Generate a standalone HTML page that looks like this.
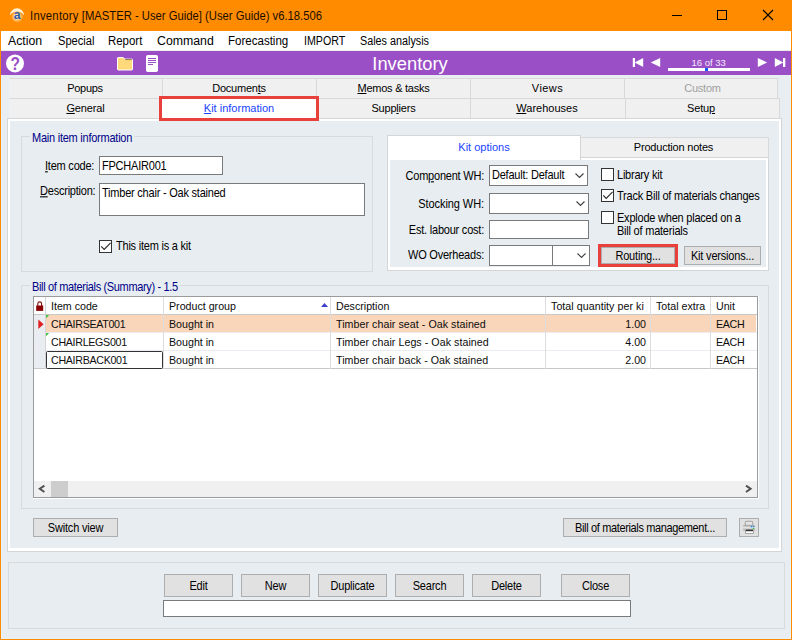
<!DOCTYPE html>
<html>
<head>
<meta charset="utf-8">
<title>Inventory</title>
<style>
*{box-sizing:border-box;margin:0;padding:0}
html,body{width:792px;height:640px;overflow:hidden}
body{background:#e7edf0;font-family:"Liberation Sans",sans-serif;font-size:11px;color:#000;position:relative}
.a{position:absolute}
.t{position:absolute;white-space:nowrap;line-height:14px;letter-spacing:-0.22px;transform:scaleY(1.08);transform-origin:0 60%}
u{text-decoration:underline;text-underline-offset:1px}
#title{left:0;top:0;width:792px;height:31px;background:#ff8c00}
#title .t{left:29.5px;top:7.5px;font-size:12.4px;line-height:16px;color:#1a0d00;letter-spacing:0;transform-origin:0 50%;transform:scaleX(.908)}
#menu{left:1px;top:31px;width:790px;height:20px;background:#fff;border-bottom:1px solid #eeefec}
#menu .t{top:2px;font-size:12.3px;line-height:16px;letter-spacing:0;transform-origin:0 50%;transform:none}
#bar .t{transform:none}
#bar{left:1px;top:51px;width:790px;height:24px;background:#9b4fc6}
#bar .ttl{left:0;width:818px;text-align:center;top:1.5px;font-size:19.2px;line-height:22px;color:#fff;letter-spacing:0;transform:scaleX(.955);transform-origin:50% 50%}
.bl{position:absolute;left:0;top:31px;width:1px;height:609px;background:#ff8c00}
.br{position:absolute;left:791px;top:31px;width:1px;height:609px;background:#ff8c00}
.bb{position:absolute;left:0;top:639px;width:792px;height:1px;background:#ff8c00}
.tab{position:absolute;height:21px;background:#f0f0f0;border:1px solid #d9d9d9;text-align:center;line-height:18px;font-size:11px}
.btn{position:absolute;background:#e1e1e1;border:1px solid #adadad;text-align:center;font-size:11px;letter-spacing:-0.2px}
.s{display:inline-block;transform:scaleY(1.08);transform-origin:0 60%}
.inp{position:absolute;background:#fff;border:1px solid #7a7a7a}
.cb{position:absolute;width:13px;height:13px;background:#fff;border:1px solid #333}
.g{position:absolute;white-space:nowrap;line-height:14px;font-size:10.67px;color:#0c0c0c}
.gc{letter-spacing:-0.3px}
.gb{position:absolute;border:1px solid #d9dadb}
.gl{position:absolute;background:#e7edf0;color:#000088;padding:0 2px;line-height:14px;white-space:nowrap;letter-spacing:-0.24px;transform:scaleY(1.08);transform-origin:0 60%}
</style>
</head>
<body>
<!-- title bar -->
<div id="title" class="a">
  <svg class="a" style="left:9px;top:7px" width="17" height="17" viewBox="0 0 17 17">
    <defs><radialGradient id="og" cx="50%" cy="50%" r="50%"><stop offset="0" stop-color="#fff0d0"/><stop offset="0.45" stop-color="#ffd59a"/><stop offset="1" stop-color="#ff8c00"/></radialGradient></defs>
    <circle cx="8.1" cy="9.6" r="6.2" fill="url(#og)"/>
    <path d="M0.9 8.4A7.1 7.1 0 0 1 15.1 8.4A8.3 8.3 0 0 0 0.9 8.4z" fill="#fff1d8"/>
    <text x="8.2" y="11.7" font-family="Liberation Sans, sans-serif" font-size="12.2" font-weight="bold" text-anchor="middle" fill="#2b5cad">a</text>
  </svg>
  <div class="t"><span style="letter-spacing:0.3px">Inventory</span> [MASTER - User Guide] (User Guide) v6.18.506</div>
  <svg class="a" style="left:671px;top:9px" width="12" height="12"><path d="M1 6.5h10" stroke="#000" stroke-width="1"/></svg>
  <svg class="a" style="left:716px;top:9px" width="12" height="12"><rect x="1.5" y="1.5" width="9" height="9" fill="none" stroke="#000" stroke-width="1"/></svg>
  <svg class="a" style="left:762px;top:9px" width="12" height="12"><path d="M1 1l10 10M11 1L1 11" stroke="#000" stroke-width="1.1"/></svg>
</div>
<div class="bl"></div><div class="br"></div><div class="bb"></div>
<div class="a" style="left:1px;top:75px;width:1px;height:564px;background:#e9f2f7"></div><div class="a" style="left:790px;top:75px;width:1px;height:564px;background:#e9f2f7"></div><div class="a" style="left:1px;top:638px;width:790px;height:1px;background:#e9f2f7"></div>
<!-- menu -->
<div id="menu" class="a">
  <div class="t" style="left:7px">Action</div>
  <div class="t" style="left:56.5px;transform:scaleX(.905)">Special</div>
  <div class="t" style="left:107px;transform:scaleX(.93)">Report</div>
  <div class="t" style="left:156px">Command</div>
  <div class="t" style="left:227px;transform:scaleX(.938)">Forecasting</div>
  <div class="t" style="left:302.5px;transform:scaleX(.866)">IMPORT</div>
  <div class="t" style="left:358.5px;transform:scaleX(.878)">Sales analysis</div>
</div>
<!-- purple bar -->
<div id="bar" class="a">
  <div class="t ttl">Inventory</div>
  <!-- coordinates relative to (1,51) -->
  <svg class="a" style="left:4px;top:3px" width="20" height="20" viewBox="0 0 20 20"><circle cx="10" cy="9.4" r="9" fill="#fff"/><text transform="translate(10.1,16) scale(1,1.2)" x="0" y="0" text-anchor="middle" font-family="Liberation Sans, sans-serif" font-weight="bold" font-size="15.5" fill="#9b4fc6">?</text></svg>
  <svg class="a" style="left:115px;top:5px" width="18" height="15" viewBox="0 0 18 15"><path d="M1.5 2.2a0.7 0.7 0 0 1 .7-.7h5.1l1.3 1.6h7.2a0.7 0.7 0 0 1 .7.7v9.5a0.7 0.7 0 0 1-.7.7H2.2a0.7 0.7 0 0 1-.7-.7z" fill="#ffd97a" stroke="#fff" stroke-width="1"/><path d="M9.2 3.6h6.6" stroke="#8c7a3c" stroke-width="1"/></svg>
  <svg class="a" style="left:145px;top:4px" width="12" height="17" viewBox="0 0 12 17"><rect x="0" y="0" width="12" height="17" rx="1.8" fill="#fff"/><path d="M2 3.5h8M2 5.5h8M2 7.5h8M2 9.5h5" stroke="#9b4fc6" stroke-width="1"/></svg>
  <svg class="a" style="left:631px;top:7px" width="12" height="9" viewBox="0 0 12 9"><rect x="0.8" y="0" width="2.2" height="9" fill="#fff"/><path d="M11.2 0v9L2.6 4.5z" fill="#fff"/></svg>
  <svg class="a" style="left:649px;top:7px" width="11" height="9" viewBox="0 0 11 9"><path d="M10.2 0v9L0.8 4.5z" fill="#fff"/></svg>
  <div class="t" style="left:690.5px;top:6px;font-size:9.5px;line-height:12px;color:#f3eafa;letter-spacing:0">16 of 33</div>
  <div class="a" style="left:667px;top:17px;width:82px;height:3px;background:#fff"></div>
  <div class="a" style="left:704px;top:17px;width:3px;height:3px;background:#0a5cff"></div>
  <svg class="a" style="left:756px;top:7px" width="11" height="9" viewBox="0 0 11 9"><path d="M0.8 0v9L10.2 4.5z" fill="#fff"/></svg>
  <svg class="a" style="left:773px;top:7px" width="12" height="9" viewBox="0 0 12 9"><rect x="9" y="0" width="2.3" height="9" fill="#fff"/><path d="M0.8 0v9L9.4 4.5z" fill="#fff"/></svg>
</div>

<!-- tabs row 1 -->
<div class="tab" style="left:9px;top:78px;width:154px;border-left-color:#f0f0f0;letter-spacing:-0.3px;padding-right:2px">Popups</div>
<div class="tab" style="left:162px;top:78px;width:155px;letter-spacing:-0.22px;padding-right:1px">Documen<u>t</u>s</div>
<div class="tab" style="left:316px;top:78px;width:155px;letter-spacing:-0.25px"><u>M</u>emos &amp; tasks</div>
<div class="tab" style="left:470px;top:78px;width:155px;letter-spacing:0.45px">Views</div>
<div class="tab" style="left:624px;top:78px;width:154px;color:#a0a0a0;letter-spacing:-0.22px;padding-left:3px">Custom</div>
<!-- tabs row 2 -->
<div class="tab" style="left:9px;top:98px;width:153px;border-left-color:#f0f0f0;letter-spacing:-0.14px"><u>G</u>eneral</div>
<div class="tab" style="left:316px;top:98px;width:155px;letter-spacing:-0.19px">Supp<u>l</u>iers</div>
<div class="tab" style="left:470px;top:98px;width:156px;padding-right:2px"><u>W</u>arehouses</div>
<div class="tab" style="left:625px;top:98px;width:155px;letter-spacing:-0.14px;padding-right:3px">Setu<u>p</u></div>
<!-- main panel -->
<div class="a" style="left:7px;top:118px;width:775px;height:434px;border:1px solid #d3d5d6;background:#fff"></div>
<div class="a" style="left:10px;top:121px;width:769px;height:427px;background:#e7edf0"></div>
<!-- selected tab -->
<div class="a" style="left:159px;top:96px;width:160px;height:25px;background:#fff;border:3px solid #e8403a;text-align:center;line-height:19px;color:#1a44ff"><u>K</u>it information</div>

<!-- Main item information group -->
<div class="gb" style="left:21px;top:136px;width:352px;height:136px"></div>
<div class="gl" style="left:30px;top:131px">Main item information</div>
<div class="t" style="left:45px;top:159px"><u>I</u>tem code:</div>
<div class="inp" style="left:99px;top:156px;width:124px;height:19px"><div class="t" style="left:2px;top:2px">FPCHAIR001</div></div>
<div class="t" style="left:40px;top:184px"><u>D</u>escription:</div>
<div class="inp" style="left:99px;top:183px;width:266px;height:33px"><div class="t" style="left:2px;top:2px">Timber chair - Oak stained</div></div>
<div class="cb" style="left:99px;top:240px"><svg class="a" style="left:0;top:0" width="11" height="11"><path d="M1.2 5.4L4.2 8.5L10.6 1.9" fill="none" stroke="#2a2a2a" stroke-width="1.15"/></svg></div>
<div class="t" style="left:116px;top:239px">This item is a kit</div>

<!-- Kit options panel -->
<div class="tab" style="left:580px;top:137px;width:189px;height:21px;line-height:18px;letter-spacing:-0.2px;padding-right:2px">Production notes</div>
<div class="a" style="left:387px;top:157px;width:382px;height:114px;border:1px solid #d3d5d6;background:#fff"></div>
<div class="a" style="left:390px;top:160px;width:376px;height:107px;background:#e7edf0"></div>
<div class="a" style="left:387px;top:135px;width:194px;height:25px;background:#fff;border:1px solid #d3d5d6;border-bottom:none;text-align:center;line-height:22px;color:#1a44ff">Kit options</div>

<div class="t" style="right:308px;top:169px">Com<u>p</u>onent WH:</div>
<div class="inp" style="left:489px;top:165px;width:99px;height:21px"><div class="t" style="left:2px;top:2px">Default: Default</div>
  <svg class="a" style="left:85px;top:7px" width="10" height="6"><path d="M0.5 0.5l4 4l4-4" fill="none" stroke="#404040" stroke-width="1.1"/></svg></div>
<div class="t" style="right:308px;top:197px;letter-spacing:-0.08px">Stocking WH:</div>
<div class="inp" style="left:489px;top:193px;width:100px;height:21px">
  <svg class="a" style="left:85.6px;top:7px" width="10" height="6"><path d="M0.5 0.5l4 4l4-4" fill="none" stroke="#404040" stroke-width="1.1"/></svg></div>
<div class="t" style="right:308px;top:222.5px">Est. labour cost:</div>
<div class="inp" style="left:489px;top:220px;width:100px;height:19px"></div>
<div class="t" style="right:308px;top:248px">WO Overheads:</div>
<div class="inp" style="left:489px;top:245px;width:101px;height:21px">
  <div class="a" style="left:62px;top:0;width:1px;height:19px;background:#7a7a7a"></div>
  <svg class="a" style="left:86.8px;top:7px" width="10" height="6"><path d="M0.5 0.5l4 4l4-4" fill="none" stroke="#404040" stroke-width="1.1"/></svg></div>

<div class="cb" style="left:601px;top:168px"></div>
<div class="t" style="left:617px;top:168px">Library kit</div>
<div class="cb" style="left:601px;top:189px"><svg class="a" style="left:0;top:0" width="11" height="11"><path d="M1.2 5.4L4.2 8.5L10.6 1.9" fill="none" stroke="#2a2a2a" stroke-width="1.15"/></svg></div>
<div class="t" style="left:617px;top:189px">Track Bill of materials changes</div>
<div class="cb" style="left:601px;top:211px"></div>
<div class="t" style="left:617px;top:212px;line-height:12px;white-space:normal;width:140px">Explode when placed on a Bill of materials</div>

<div class="a" style="left:598px;top:244px;width:80px;height:23px;border:3px solid #e8403a;background:#adadad"></div>
<div class="btn" style="left:601px;top:247px;width:74px;height:17px;line-height:17px"><span class="s">Routing...</span></div>
<div class="btn" style="left:684px;top:246px;width:77px;height:19px;line-height:19px"><span class="s">Kit versions...</span></div>

<!-- BOM group -->
<div class="gb" style="left:21px;top:285px;width:748px;height:224px"></div>
<div class="gl" style="left:30px;top:280px;letter-spacing:-0.34px">Bill of materials (Summary) - 1.5</div>
<div id="grid" class="a" style="left:33px;top:296px;width:725px;height:202px;border:1px solid #9b9b9b;background:#fff;overflow:hidden">
  <!-- coordinates inside are relative to (34,297) -->
  <div class="a" style="left:0;top:18px;width:11px;height:54px;background:#e9edf1"></div>
  <div class="a" style="left:12px;top:18px;width:710px;height:18px;background:#f9d5ba"></div>
  <!-- horizontal lines -->
  <div class="a" style="left:0;top:17px;width:723px;height:1px;background:#c8c8c8"></div>
  <div class="a" style="left:0;top:35px;width:723px;height:1px;background:#ebebf2"></div>
  <div class="a" style="left:0;top:53px;width:723px;height:1px;background:#ebebf2"></div>
  <div class="a" style="left:0;top:71px;width:723px;height:1px;background:#c8c8c8"></div>
  <!-- vertical lines -->
  <div class="a" style="left:11px;top:0;width:1px;height:72px;background:#d4d4d4"></div>
  <div class="a" style="left:129px;top:0;width:1px;height:72px;background:#dcdcdc"></div>
  <div class="a" style="left:296px;top:0;width:1px;height:72px;background:#dcdcdc"></div>
  <div class="a" style="left:511px;top:0;width:1px;height:72px;background:#dcdcdc"></div>
  <div class="a" style="left:616px;top:0;width:1px;height:72px;background:#dcdcdc"></div>
  <div class="a" style="left:676px;top:0;width:1px;height:72px;background:#dcdcdc"></div>
  <!-- lock -->
  <svg class="a" style="left:2px;top:4px" width="8" height="11" viewBox="0 0 8 11"><path d="M1.8 5V2.8a1.9 1.9 0 0 1 3.8 0V5" fill="none" stroke="#8b0a0a" stroke-width="1.1"/><rect x="0.2" y="4.5" width="7" height="5.4" fill="#8b0000"/></svg>
  <!-- row marker -->
  <svg class="a" style="left:3.5px;top:21.7px" width="7" height="11"><path d="M0.3 0.5L5.6 5.3L0.3 10.1z" fill="#e02020"/></svg>
  <!-- green corners -->
  <svg class="a" style="left:12px;top:18px" width="4" height="4"><path d="M0 0h3.2L0 3.2z" fill="#3fc23f"/></svg>
  <svg class="a" style="left:12px;top:36px" width="4" height="4"><path d="M0 0h3.2L0 3.2z" fill="#3fc23f"/></svg>
  <!-- focus cell -->
  <div class="a" style="left:12px;top:54px;width:117px;height:18px;border:1px solid #333;border-radius:1.5px"></div>
  <!-- sort arrow -->
  <svg class="a" style="left:287px;top:6px" width="7" height="4"><path d="M0 4L3.5 0L7 4z" fill="#4040cc"/></svg>
  <div class="g" style="left:17px;top:2px">Item code</div>
  <div class="g" style="left:135px;top:2px">Product group</div>
  <div class="g" style="left:302px;top:2px">Description</div>
  <div class="g" style="left:517px;top:2px;width:93px;overflow:hidden;letter-spacing:0.05px">Total quantity per kit</div>
  <div class="g" style="left:622px;top:2px">Total extra</div>
  <div class="g" style="left:682px;top:2px">Unit</div>

  <div class="g gc" style="left:17px;top:20px">CHAIRSEAT001</div>
  <div class="g" style="left:135px;top:20px">Bought in</div>
  <div class="g" style="left:302px;top:20px;letter-spacing:0.05px">Timber chair seat - Oak stained</div>
  <div class="g" style="right:111px;top:20px">1.00</div>
  <div class="g gc" style="left:682px;top:20px">EACH</div>

  <div class="g gc" style="left:17px;top:38px">CHAIRLEGS001</div>
  <div class="g" style="left:135px;top:38px">Bought in</div>
  <div class="g" style="left:302px;top:38px;letter-spacing:0.05px">Timber chair Legs - Oak stained</div>
  <div class="g" style="right:111px;top:38px">4.00</div>
  <div class="g gc" style="left:682px;top:38px">EACH</div>

  <div class="g gc" style="left:17px;top:56px">CHAIRBACK001</div>
  <div class="g" style="left:135px;top:56px">Bought in</div>
  <div class="g" style="left:302px;top:56px;letter-spacing:0.05px">Timber chair back - Oak stained</div>
  <div class="g" style="right:111px;top:56px">2.00</div>
  <div class="g gc" style="left:682px;top:56px">EACH</div>

  <!-- scrollbar -->
  <div class="a" style="left:0;top:184px;width:723px;height:16px;background:#f0f0f0"></div>
  <div class="a" style="left:17px;top:184px;width:17px;height:16px;background:#cdcdcd"></div>
  <svg class="a" style="left:4px;top:188px" width="8" height="8"><path d="M6.4 0.6L1.8 3.8L6.4 7" fill="none" stroke="#505050" stroke-width="2"/></svg>
  <svg class="a" style="left:711px;top:188px" width="8" height="8"><path d="M1 0.6L5.6 3.8L1 7" fill="none" stroke="#505050" stroke-width="2"/></svg>
</div>

<div class="a" style="left:758px;top:296px;width:1px;height:203px;background:#fff"></div>
<div class="a" style="left:33px;top:498px;width:726px;height:1px;background:#fff"></div>
<div class="btn" style="left:33px;top:518px;width:85px;height:19px;line-height:18px"><span class="s">Switch view</span></div>
<div class="btn" style="left:563px;top:518px;width:164px;height:19px;line-height:18px;letter-spacing:-0.36px"><span class="s">Bill of materials management...</span></div>
<div class="btn" style="left:739px;top:518px;width:20px;height:19px"><svg class="a" style="left:-1px;top:-1px" width="20" height="19" viewBox="0 0 20 19"><defs><linearGradient id="pg" x1="0" y1="0" x2="0" y2="1"><stop offset="0" stop-color="#9c9c9c"/><stop offset="0.45" stop-color="#e4e4e4"/><stop offset="1" stop-color="#a8a8a8"/></linearGradient></defs><rect x="6.3" y="3.3" width="7.4" height="4" rx="0.8" fill="#e6e6e6" stroke="#8e8e8e" stroke-width="0.8"/><rect x="4" y="7" width="12" height="5.6" rx="1.2" fill="url(#pg)"/><rect x="6.8" y="11.7" width="7.2" height="1.3" fill="#000"/><rect x="6.4" y="13" width="8" height="2.6" fill="#fafafa" stroke="#8a8a8a" stroke-width="0.7"/><rect x="11.8" y="8" width="1.4" height="1.3" fill="#1e8cf0"/><rect x="13.9" y="8" width="1.4" height="1.3" fill="#1e8cf0"/><rect x="13.9" y="10" width="1.4" height="1.2" fill="#35c435"/></svg></div>

<!-- bottom group -->
<div class="gb" style="left:8px;top:562px;width:777px;height:67px"></div>
<div class="btn" style="left:164px;top:574px;width:69px;height:23px;line-height:22px"><span class="s">Edit</span></div>
<div class="btn" style="left:241px;top:574px;width:69px;height:23px;line-height:22px"><span class="s">New</span></div>
<div class="btn" style="left:318px;top:574px;width:69px;height:23px;line-height:22px"><span class="s">Duplicate</span></div>
<div class="btn" style="left:395px;top:574px;width:69px;height:23px;line-height:22px"><span class="s">Search</span></div>
<div class="btn" style="left:472px;top:574px;width:69px;height:23px;line-height:22px"><span class="s">Delete</span></div>
<div class="btn" style="left:561px;top:574px;width:69px;height:23px;line-height:22px"><span class="s">Close</span></div>
<div class="inp" style="left:163px;top:600px;width:468px;height:17px"></div>
</body>
</html>
